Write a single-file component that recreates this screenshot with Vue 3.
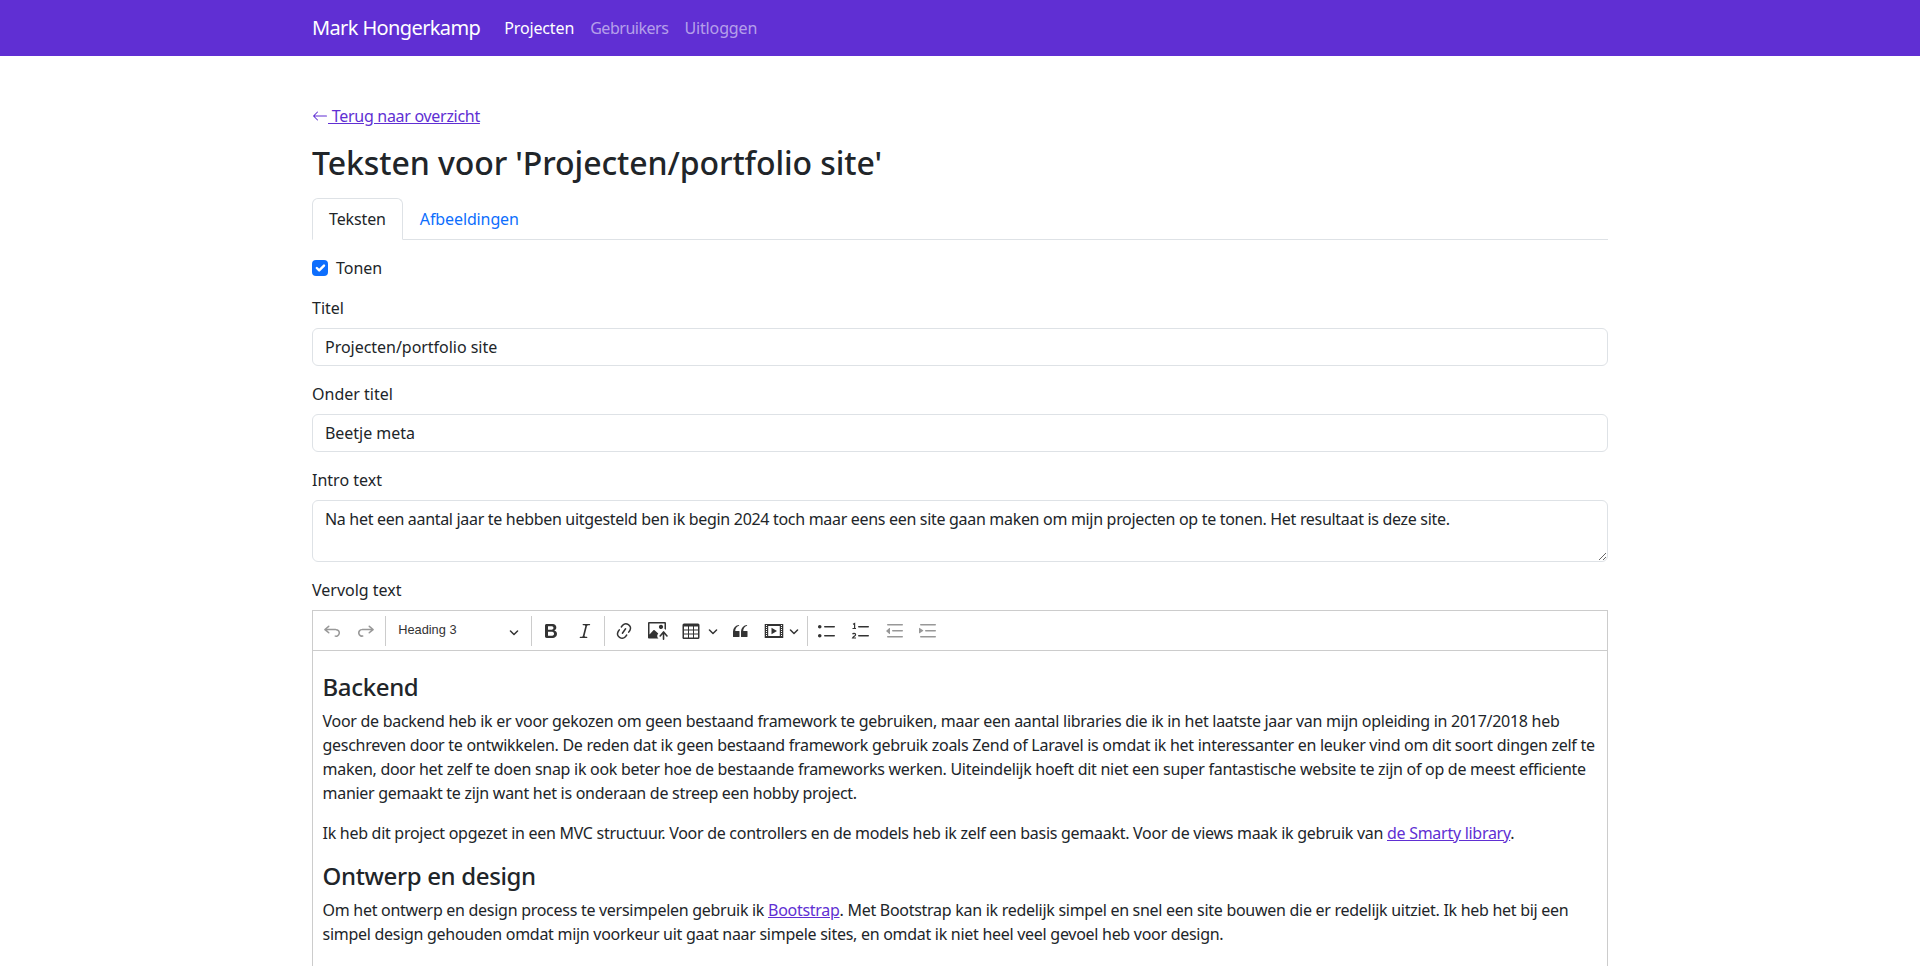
<script setup>
const navLinks = [
  { label: 'Projecten', active: true, wide: false },
  { label: 'Gebruikers', active: false, wide: true },
  { label: 'Uitloggen', active: false, wide: false }
]
</script>

<template>
  <nav class="navbar">
    <div class="container nav-inner">
      <a class="brand" href="#">Mark Hongerkamp</a>
      <a v-for="l in navLinks" :key="l.label" class="nav-link" :class="{ active: l.active, wide: l.wide }" href="#">{{ l.label }}</a>
    </div>
  </nav>
  <main class="container main">
    <a class="back" href="#"><svg class="arrow" width="16" height="16" viewBox="0 0 16 16" fill="currentColor"><path fill-rule="evenodd" d="M15 8a.5.5 0 0 0-.5-.5H2.707l3.147-3.146a.5.5 0 1 0-.708-.708l-4 4a.5.5 0 0 0 0 .708l4 4a.5.5 0 0 0 .708-.708L2.707 8.5H14.5A.5.5 0 0 0 15 8z"/></svg> Terug naar overzicht</a>
    <h1>Teksten voor 'Projecten/portfolio site'</h1>
    <div class="tabs">
      <a class="tab active" href="#">Teksten</a>
      <a class="tab" href="#">Afbeeldingen</a>
    </div>
    <label class="check">
      <span class="box"><svg width="16" height="16" viewBox="0 0 20 20"><path fill="none" stroke="#fff" stroke-linecap="round" stroke-linejoin="round" stroke-width="3" d="m6 10 3 3 6-6"/></svg></span>
      Tonen
    </label>
    <label class="lbl">Titel</label>
    <input class="ctl" value="Projecten/portfolio site" />
    <label class="lbl">Onder titel</label>
    <input class="ctl" value="Beetje meta" />
    <label class="lbl">Intro text</label>
    <textarea class="ctl area">Na het een aantal jaar te hebben uitgesteld ben ik begin 2024 toch maar eens een site gaan maken om mijn projecten op te tonen. Het resultaat is deze site.</textarea>
    <label class="lbl">Vervolg text</label>
    <div class="editor">
      <div class="toolbar">
        <button class="tb dim"><svg viewBox="0 0 20 20"><path d="m5.042 9.367 2.189 1.837a.75.75 0 0 1-.965 1.149l-3.788-3.18a.747.747 0 0 1-.21-.284.75.75 0 0 1 .17-.945L6.23 4.762a.75.75 0 1 1 .964 1.15L4.863 7.866h8.917A.75.75 0 0 1 14 7.9a4 4 0 1 1-1.477 7.718l.344-1.489a2.5 2.5 0 1 0 1.094-4.73l.008-.032H5.042z"/></svg></button>
        <button class="tb dim shift"><svg viewBox="0 0 20 20"><path d="m14.958 9.367-2.189 1.837a.75.75 0 0 0 .965 1.149l3.788-3.18a.747.747 0 0 0 .21-.284.75.75 0 0 0-.17-.945L13.77 4.762a.75.75 0 1 0-.964 1.15l2.331 1.955H6.22A.75.75 0 0 0 6 7.9a4 4 0 1 0 1.477 7.718l-.344-1.489A2.5 2.5 0 1 1 5.92 9.367h9.038z"/></svg></button>
        <span class="sep unshift"></span>
        <div class="heading"><span>Heading 3</span><svg class="chev" viewBox="0 0 10 10"><path d="M.941 4.523a.75.75 0 1 1 1.06-1.06l3.006 3.005 3.005-3.005a.75.75 0 1 1 1.06 1.06l-3.549 3.55a.75.75 0 0 1-1.06 0L.941 4.523z"/></svg></div>
        <span class="sep"></span>
        <button class="tb"><svg viewBox="0 0 20 20"><path d="M10.187 17H5.773c-.637 0-1.092-.138-1.364-.415-.273-.277-.409-.718-.409-1.323V4.738c0-.617.14-1.062.419-1.332.279-.27.73-.406 1.354-.406h4.68c.69 0 1.288.041 1.793.124.506.083.96.242 1.36.478.341.197.644.447.906.75a3.262 3.262 0 0 1 .808 2.162c0 1.401-.722 2.426-2.167 3.075C15.05 10.175 16 11.315 16 13.01a3.756 3.756 0 0 1-2.296 3.504 6.1 6.1 0 0 1-1.517.377c-.571.073-1.238.11-2 .11zm-.217-6.217H7v4.087h3.069c1.977 0 2.965-.69 2.965-2.072 0-.707-.256-1.22-.768-1.537-.512-.319-1.277-.478-2.296-.478zM7 5.13v3.619h2.606c.729 0 1.292-.067 1.69-.2a1.6 1.6 0 0 0 .91-.765c.165-.267.247-.566.247-.897 0-.707-.26-1.176-.778-1.409-.519-.232-1.31-.348-2.375-.348H7z"/></svg></button>
        <button class="tb"><svg viewBox="0 0 20 20"><path d="m9.586 14.633.021.004c-.036.335.095.655.393.962.082.083.173.15.274.201h1.474a.6.6 0 1 1 0 1.2H5.304a.6.6 0 0 1 0-1.2h1.15c.474-.07.809-.182 1.005-.334.157-.122.291-.32.404-.597l2.416-9.55a1.053 1.053 0 0 0-.281-.823 1.12 1.12 0 0 0-.442-.296H8.15a.6.6 0 0 1 0-1.2h6.443a.6.6 0 1 1 0 1.2h-1.195c-.376.056-.65.155-.823.296-.215.175-.423.439-.623.79l-2.366 9.347z"/></svg></button>
        <span class="sep"></span>
        <button class="tb unshift"><svg viewBox="0 0 20 20"><path d="m11.077 15 .991-1.416a.75.75 0 1 1 1.229.86l-1.148 1.64a.748.748 0 0 1-.217.206 5.251 5.251 0 0 1-8.503-5.955.741.741 0 0 1 .12-.274l1.147-1.639a.75.75 0 1 1 1.228.86L4.933 10.7l.006.003a3.75 3.75 0 0 0 6.132 4.294l.006.004zm5.494-5.335a.748.748 0 0 1-.12.274l-1.147 1.639a.75.75 0 1 1-1.228-.86l.86-1.23a3.75 3.75 0 0 0-6.144-4.301l-.86 1.229a.75.75 0 0 1-1.229-.86l1.148-1.64a.748.748 0 0 1 .217-.206 5.251 5.251 0 0 1 8.503 5.955zm-4.563-2.532a.75.75 0 0 1 .184 1.045l-3.155 4.505a.75.75 0 1 1-1.229-.86l3.155-4.506a.75.75 0 0 1 1.045-.184z"/></svg></button>
        <button class="tb shift"><svg viewBox="0 0 20 20"><path d="M1.201 1C.538 1 0 1.47 0 2.1v14.363c0 .64.534 1.037 1.186 1.037h9.494a2.97 2.97 0 0 1-.414-.287 2.998 2.998 0 0 1-1.055-2.03 3.003 3.003 0 0 1 .693-2.185l.383-.455-.02.018-3.65-3.41a.695.695 0 0 0-.957-.034L1.5 13.6V2.5h15v5.535a2.97 2.97 0 0 1 1.412.932l.088.105V2.1c0-.63-.547-1.1-1.2-1.1H1.202Zm11.713 2.803a2.146 2.146 0 0 0-2.049 1.992 2.14 2.14 0 0 0 1.28 2.096 2.13 2.13 0 0 0 2.644-3.11 2.134 2.134 0 0 0-1.875-.978Z"/><path d="M15.522 19.1a.79.79 0 0 0 .79-.79v-5.373l2.059 2.455a.79.79 0 1 0 1.211-1.015l-3.352-3.995a.79.79 0 0 0-.995-.179.789.789 0 0 0-.299.221l-3.35 3.99a.79.79 0 1 0 1.21 1.017l1.936-2.306v5.185c0 .436.354.79.79.79Z"/></svg></button>
        <button class="tb tb-drop table-drop"><svg viewBox="0 0 20 20"><path fill-rule="evenodd" d="M3 5.5v3h4v-3H3zm0 4v3h4v-3H3zm0 4v3h4v-3H3zm5 3h4v-3H8v3zm5 0h4v-3h-4v3zm4-4v-3h-4v3h4zm0-4v-3h-4v3h4zm1.5 8a1.5 1.5 0 0 1-1.5 1.5H3A1.500 1.500 0 0 1 1.500 16V4A1.500 1.500 0 0 1 3 2.500h14A1.500 1.500 0 0 1 18.500 4v12zM8 8.500h4v-3H8v3zm0 4h4v-3H8v3z"/></svg><svg class="chev" viewBox="0 0 10 10"><path d="M.941 4.523a.75.75 0 1 1 1.06-1.06l3.006 3.005 3.005-3.005a.75.75 0 1 1 1.06 1.06l-3.549 3.55a.75.75 0 0 1-1.06 0L.941 4.523z"/></svg></button>
        <button class="tb"><svg viewBox="0 0 20 20"><path d="M3 10.423a6.5 6.5 0 0 1 6.056-6.408l.038.67C6.448 5.423 5.354 7.663 5.22 10H9c.552 0 .5.432.5.986v4.511c0 .554-.448.503-1 .503h-5c-.552 0-.5-.449-.5-1.003v-4.574zm8 0a6.5 6.5 0 0 1 6.056-6.408l.038.67c-2.646.739-3.74 2.979-3.873 5.315H17c.552 0 .5.432.5.986v4.511c0 .554-.448.503-1 .503h-5c-.552 0-.5-.449-.5-1.003v-4.574z"/></svg></button>
        <button class="tb tb-drop media-drop"><svg viewBox="0 0 20 20"><path fill-rule="evenodd" d="M18.68 3.03c.6 0 .59-.03.59.55v12.84c0 .59.01.56-.59.56H1.29c-.6 0-.59.03-.59-.56V3.58c0-.58-.01-.55.59-.55h17.39zM15.770 15V5H4.200v10h11.570zM2 4v1h1V4H2zm0 2v1h1V6H2zm0 2v1h1V8H2zm0 2v1h1v-1H2zm0 2v1h1v-1H2zm0 2v1h1v-1H2zM17 4v1h1V4h-1zm0 2v1h1V6h-1zm0 2v1h1V8h-1zm0 2v1h1v-1h-1zm0 2v1h1v-1h-1zm0 2v1h1v-1h-1z"/><path d="M7.500 6.800v6.400L13 10z"/></svg><svg class="chev" viewBox="0 0 10 10"><path d="M.941 4.523a.75.75 0 1 1 1.06-1.06l3.006 3.005 3.005-3.005a.75.75 0 1 1 1.06 1.06l-3.549 3.55a.75.75 0 0 1-1.06 0L.941 4.523z"/></svg></button>
        <span class="sep"></span>
        <button class="tb"><svg viewBox="0 0 20 20"><path d="M7 5.75c0 .414.336.75.75.75h9.5a.75.75 0 1 0 0-1.500h-9.500a.75.75 0 0 0-.75.75zm-6 0C1 4.784 1.777 4 2.750 4c.966 0 1.750.777 1.750 1.750 0 .966-.777 1.750-1.750 1.750C1.784 7.500 1 6.723 1 5.750zm6 9c0 .414.336.75.75.75h9.500a.75.75 0 1 0 0-1.500h-9.500a.75.75 0 0 0-.75.75zm-6 0c0-.966.777-1.750 1.750-1.750.966 0 1.750.777 1.750 1.750 0 .966-.777 1.750-1.750 1.750-.966 0-1.750-.777-1.750-1.750z"/></svg></button>
        <button class="tb"><svg viewBox="0 0 20 20"><path d="M7 5.750c0 .414.336.75.75.75h9.500a.75.75 0 1 0 0-1.500h-9.500a.75.75 0 0 0-.75.75zm0 9c0 .414.336.75.75.75h9.500a.75.75 0 1 0 0-1.500h-9.500a.75.75 0 0 0-.75.75z"/><path class="line" d="M2 3.300l1.600-.8v5M1.500 7.500h3.500M1.600 13.200c.4-1.200 3-1.200 3 .5 0 1.200-2.300 1.800-3 3.300h3.400"/></svg></button>
        <button class="tb dim shift"><svg viewBox="0 0 20 20"><path d="M2 3.750c0 .414.336.75.75.75h14.500a.75.75 0 1 0 0-1.500H2.750a.75.75 0 0 0-.75.75zm5 6c0 .414.336.75.75.75h9.500a.75.75 0 1 0 0-1.500h-9.500a.75.75 0 0 0-.75.75zM2.750 16.500h14.500a.75.75 0 1 0 0-1.500H2.750a.75.75 0 1 0 0 1.500zM5 7.300v5.400a.4.4 0 0 1-.63.33L1.300 10.330a.4.4 0 0 1 0-.66L4.370 6.970A.4.4 0 0 1 5 7.300z"/></svg></button>
        <button class="tb dim"><svg viewBox="0 0 20 20"><path d="M2 3.750c0 .414.336.75.75.75h14.500a.75.75 0 1 0 0-1.500H2.750a.75.75 0 0 0-.75.75zm5 6c0 .414.336.75.75.75h9.500a.75.75 0 1 0 0-1.500h-9.500a.75.75 0 0 0-.75.75zM2.750 16.500h14.500a.75.75 0 1 0 0-1.500H2.750a.75.75 0 1 0 0 1.500zM1.632 6.950 5.020 9.358a.4.4 0 0 1-.013.661l-3.390 2.207A.4.4 0 0 1 1 11.892V7.275a.4.4 0 0 1 .632-.326z"/></svg></button>
      </div>
      <div class="content">
        <h3>Backend</h3>
        <p>Voor de backend heb ik er voor gekozen om geen bestaand framework te gebruiken, maar een aantal libraries die ik in het laatste jaar van mijn opleiding in 2017/2018 heb geschreven door te ontwikkelen. De reden dat ik geen bestaand framework gebruik zoals Zend of Laravel is omdat ik het interessanter en leuker vind om dit soort dingen zelf te maken, door het zelf te doen snap ik ook beter hoe de bestaande frameworks werken. Uiteindelijk hoeft dit niet een super fantastische website te zijn of op de meest efficiente manier gemaakt te zijn want het is onderaan de streep een hobby project.</p>
        <p>Ik heb dit project opgezet in een MVC structuur. Voor de controllers en de models heb ik zelf een basis gemaakt. Voor de views maak ik gebruik van <a href="#">de Smarty library</a>.</p>
        <h3 class="next">Ontwerp en design</h3>
        <p>Om het ontwerp en design process te versimpelen gebruik ik <a href="#">Bootstrap</a>. Met Bootstrap kan ik redelijk simpel en snel een site bouwen die er redelijk uitziet. Ik heb het bij een simpel design gehouden omdat mijn voorkeur uit gaat naar simpele sites, en omdat ik niet heel veel gevoel heb voor design.</p>
      </div>
    </div>
  </main>
</template>

<style>
html, body { overflow: hidden; height: 966px; }
</style>

<style scoped>
* { box-sizing: border-box; }
.container { width: 1320px; margin: 0 auto; padding: 0 12px; font-family: "Noto Sans", sans-serif; font-size: 16px; line-height: 24px; color: #212529; }
.navbar { background: #602fd3; height: 56px; }
.nav-inner { display: flex; align-items: center; height: 56px; }
.brand { color: #fff; font-size: 20px; line-height: 30px; margin-right: 16px; text-decoration: none; letter-spacing: -.62px; }
.nav-link { color: rgba(255,255,255,.55); padding: 8px; text-decoration: none; letter-spacing: -.14px; }
.nav-link.wide { letter-spacing: -.47px; }
.nav-link.active { color: #fff; }
.main { padding-top: 48px; }
.back { display: block; color: #602fd3; text-decoration: underline; height: 24px; letter-spacing: -.3px; }
.arrow { vertical-align: -2px; }
h1 { font-size: 32px; line-height: 38.4px; font-weight: 500; margin: 16px 0 16px; letter-spacing: -.08px; }
.tabs { display: flex; border-bottom: 1px solid #dee2e6; height: 42px; margin-bottom: 16px; }
.tab { padding: 8px 16px; color: #0d6efd; text-decoration: none; border: 1px solid transparent; border-radius: 6px 6px 0 0; height: 42px; letter-spacing: -.12px; }
.tab.active { color: #212529; background: #fff; border-color: #dee2e6 #dee2e6 #fff; }
.check { display: flex; align-items: center; gap: 8px; height: 24px; margin-bottom: 16px; }
.box { width: 16px; height: 16px; background: #0d6efd; border-radius: 4px; display: block; }
.box svg { display: block; }
.lbl { display: block; height: 24px; margin-bottom: 8px; }
.ctl { display: block; width: 100%; height: 38px; padding: 6px 12px; font: inherit; color: #212529; background: #fff; border: 1px solid #dee2e6; border-radius: 6px; margin-bottom: 16px; outline: 0; letter-spacing: -.03px; }
.area { height: 62px; letter-spacing: -.31px; }
.editor { border: 1px solid #ccc; height: 500px; }
.toolbar { display: flex; align-items: center; height: 40px; border-bottom: 1px solid #ccc; padding: 0 0 0 5px; gap: 5.4px; background: #fff; }
.tb { display: flex; align-items: center; justify-content: center; background: none; border: 0; padding: 0; height: 30px; width: 28px; color: #333; flex: none; }
.tb svg { width: 20px; height: 20px; fill: currentColor; }
.tb .line { fill: none; stroke: currentColor; stroke-width: 1.2; }
.tb.dim { opacity: .5; }
.shift { margin-left: 1px; }
.unshift { margin-left: -1px; }
.tb-drop { justify-content: flex-start; }
.table-drop { width: 43.2px; padding-left: 3.6px; gap: 7px; }
.media-drop { width: 42.2px; padding-left: 4.6px; gap: 5.6px; }
.tb .chev, .chev { width: 10px; height: 10px; fill: #333; flex: none; }
.sep { width: 1px; height: 30px; background: #ccc; flex: none; }
.heading { width: 134.4px; display: flex; align-items: center; justify-content: space-between; padding: 0 7px 0 7px; font: 12.8px/1 "Liberation Sans", sans-serif; color: #333; flex: none; }
.heading span { margin-top: -2px; }
.heading .chev { margin-top: 2px; }
.content { padding: 22px 9.5px 0; letter-spacing: -.28px; }
.content h3 { font-size: 24px; line-height: 28.8px; font-weight: 500; margin: 0 0 7px; letter-spacing: -.35px; }
.content h3.next { margin-top: 17px; }
.content p { margin: 0 0 16px; }
.content p:has(+ .next) { margin-bottom: 0; }
.content a { color: #602fd3; }
</style>
